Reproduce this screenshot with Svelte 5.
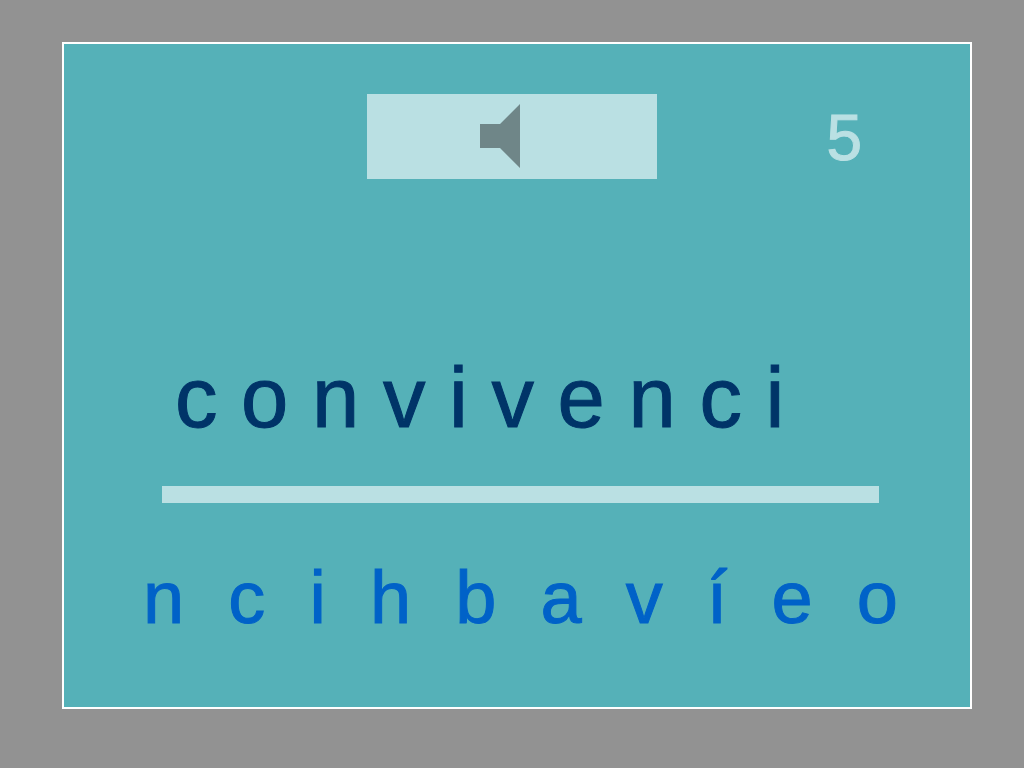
<script lang="ts">
	let typed = $state('convivenci');
	let count = $state(5);

	const choices = ['n', 'c', 'i', 'h', 'b', 'a', 'v', 'í', 'e', 'o'];

	function addLetter(letter: string) {
		typed += letter;
	}
</script>

<main class="page">
	<section class="board">
		<header class="top">
			<button type="button" class="listen" aria-label="Escuchar">
				<svg viewBox="0 0 40 64" width="40" height="64" aria-hidden="true">
					<path d="M0 20H20L40 0V64L20 44H0Z" fill="currentColor" />
				</svg>
			</button>
			<span class="count">{count}</span>
		</header>

		<output class="word">{typed.split('').join(' ')}</output>

		<hr class="line" />

		<div class="letters">
			{#each choices as letter}
				<button type="button" class="letter" onclick={() => addLetter(letter)}>{letter}</button>
			{/each}
		</div>
	</section>
</main>

<style>
	:global(body) {
		background: #929292;
	}

	.page {
		box-sizing: border-box;
		min-height: 100vh;
		display: flex;
		padding: 42px 52px 59px 62px;
		font-family: 'Liberation Sans', Arial, sans-serif;
	}

	.board {
		flex: 1;
		display: flex;
		flex-direction: column;
		box-sizing: border-box;
		padding: 50px 72px 0 79px;
		border: 2px solid #fff;
		background: #55b1b8;
	}

	.top {
		display: grid;
		grid-template-columns: 1fr 290px 1fr;
		align-items: center;
		margin: 0 18px 0 1px;
	}

	.listen {
		grid-column: 2;
		height: 85px;
		display: flex;
		align-items: center;
		justify-content: center;
		padding: 0 24px 1px 0;
		border: none;
		background: #bae0e3;
		color: #6f8688;
		cursor: pointer;
	}

	.count {
		justify-self: end;
		padding: 2px 18px 0 0;
		color: #bae0e3;
		font-size: 64px;
		line-height: 72px;
		-webkit-text-stroke: 1px currentColor;
	}

	.word {
		margin: 171px 0 0 32px;
		color: #003468;
		font-size: 85px;
		line-height: 96px;
		white-space: nowrap;
		-webkit-text-stroke: 1px currentColor;
	}

	.line {
		width: auto;
		height: 17px;
		margin: 40px 19px 0;
		border: none;
		background: #bae0e3;
	}

	.letters {
		display: flex;
		justify-content: space-between;
		margin-top: 53px;
	}

	.letter {
		padding: 0;
		border: none;
		background: none;
		color: #0062c8;
		font: inherit;
		font-size: 74px;
		line-height: 84px;
		cursor: pointer;
		-webkit-text-stroke: 1px currentColor;
	}
</style>
